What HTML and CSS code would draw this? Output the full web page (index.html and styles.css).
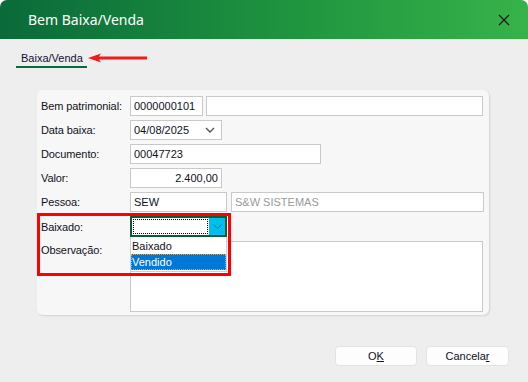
FILE: index.html
```html
<!DOCTYPE html>
<html>
<head>
  <link rel="stylesheet" href="styles.css">
</head>
<body>
  <div class="window">
    <div class="titlebar">
      <span class="title">Bem Baixa/Venda</span>
      <svg class="close" width="12" height="12" viewBox="0 0 12 12">
        <path d="M1 1 L11 11 M11 1 L1 11" stroke="#1b1b1b" stroke-width="1.3" fill="none"/>
      </svg>
    </div>

    <div class="tabs">
      <div class="tab">Baixa/Venda</div>
      <svg class="arrow" width="60" height="10" viewBox="0 0 60 10">
        <path d="M0 5 L13 0.5 L11 3.5 L59 3.5 L59 6.5 L11 6.5 L13 9.5 Z" fill="#ee1c1c"/>
      </svg>
    </div>

    <div class="panel">
      <div class="form">
        <label>Bem patrimonial:</label>
        <div class="field">
          <div class="input w73">0000000101</div>
          <div class="input w277"></div>
        </div>

        <label>Data baixa:</label>
        <div class="field">
          <div class="input w92 date">04/08/2025
            <svg width="10" height="6" viewBox="0 0 10 6"><path d="M1 1 L5 5 L9 1" stroke="#555" stroke-width="1.4" fill="none"/></svg>
          </div>
        </div>

        <label>Documento:</label>
        <div class="field">
          <div class="input w191">00047723</div>
        </div>

        <label>Valor:</label>
        <div class="field">
          <div class="input w92 right">2.400,00</div>
        </div>

        <label>Pessoa:</label>
        <div class="field">
          <div class="input w96">SEW</div>
          <div class="input w253 muted">S&amp;W SISTEMAS</div>
        </div>

        <label>Baixado:</label>
        <div class="field">
          <div class="combo">
            <div class="combo-text"></div>
            <div class="combo-btn">
              <svg width="9" height="5" viewBox="0 0 9 5"><path d="M0.5 0.5 L4.5 4.5 L8.5 0.5" stroke="#3a6f8a" stroke-width="1" fill="none"/></svg>
            </div>
            <div class="droplist">
              <div class="opt">Baixado</div>
              <div class="opt sel">Vendido</div>
            </div>
          </div>
        </div>

        <label class="top">Observação:</label>
        <div class="field">
          <div class="memo"></div>
        </div>
      </div>

      <div class="highlight"></div>
    </div>

    <div class="footer">
      <button class="btn">O<u>K</u></button>
      <button class="btn">Cancela<u>r</u></button>
    </div>
  </div>
</body>
</html>
```

FILE: styles.css
```css
html, body {
  margin: 0;
  background: #ffffff;
}

body {
  font-family: 'Liberation Sans', Arial, sans-serif;
  font-size: 11px;
  color: #111122;
}

.window {
  width: 528px;
  height: 382px;
  background: #eeeeee;
  display: flex;
  flex-direction: column;
  overflow: hidden;
  border-radius: 7px 7px 0 0;
}

.titlebar {
  height: 39px;
  flex: none;
  display: flex;
  align-items: center;
  justify-content: space-between;
  padding: 0 18px 0 28px;
  background: linear-gradient(90deg, #0a6a3a 0%, #1f943f 55%, #37b34a 100%);
  color: #ffffff;
}

.title {
  font-family: 'Noto Sans', sans-serif;
  font-size: 14px;
}

.close {
  margin-top: 1px;
}

.tabs {
  display: flex;
  align-items: center;
  padding: 11px 0 0 16px;
}

.tab {
  width: 71px;
  box-sizing: border-box;
  padding: 0 0 0 5px;
  line-height: 16px;
  border-bottom: 2px solid #0a6b3a;
  color: #111133;
  white-space: nowrap;
}

.arrow {
  margin: -2px 0 0 1px;
}

.panel {
  position: relative;
  margin: 22px 0 0 37px;
  width: 452px;
  height: 225px;
  box-sizing: border-box;
  padding: 6px 0 0 4px;
  background: #f7f7f7;
  border-radius: 6px;
  box-shadow: 1px 1px 2px rgba(0, 0, 0, 0.12);
}

.form {
  display: grid;
  grid-template-columns: 89px auto;
  row-gap: 4px;
  align-items: center;
}

.form label {
  white-space: nowrap;
  letter-spacing: -0.1px;
}

.form label.top {
  align-self: start;
  padding-top: 3px;
}

.field {
  display: flex;
  gap: 3px;
}

.input {
  height: 20px;
  box-sizing: border-box;
  border: 1px solid #c9c9c9;
  background: #ffffff;
  padding: 0 3px;
  line-height: 18px;
  white-space: nowrap;
}

.w73 { width: 73px; }
.w92 { width: 92px; }
.w96 { width: 97px; margin-right: 1px; }
.w191 { width: 191px; }
.w253 { width: 253px; }
.w277 { width: 277px; }

.right { text-align: right; }

.muted { color: #9a9a9a; }

.date {
  display: flex;
  align-items: center;
  justify-content: space-between;
  padding-right: 6px;
}

.combo {
  position: relative;
  width: 97px;
  height: 21px;
  box-sizing: border-box;
  border: 2px solid #0d5a36;
  background: #ffffff;
  display: flex;
}

.combo-text {
  flex: 1;
  margin: 1px;
  border: 1px dotted #000000;
}

.combo-btn {
  width: 16px;
  background: #00bfef;
  display: flex;
  align-items: center;
  justify-content: center;
}

.droplist {
  position: absolute;
  top: 19px;
  left: -2px;
  width: 97px;
  height: 35px;
  box-sizing: border-box;
  border: 1px solid #d0d0d0;
  border-top: none;
  background: #ffffff;
  padding: 1px 0 0 0;
  z-index: 2;
}

.opt {
  height: 16px;
  line-height: 16px;
  padding: 0 1px;
}

.opt.sel {
  background: #0078d7;
  color: #ffffff;
  outline: 1px dotted #f0a030;
  outline-offset: -1px;
}

.memo {
  width: 353px;
  height: 71px;
  box-sizing: border-box;
  border: 1px solid #c9c9c9;
  background: #ffffff;
}

.highlight {
  position: absolute;
  left: 0;
  top: 123px;
  width: 194px;
  height: 63px;
  box-sizing: border-box;
  border: 3px solid #ff0000;
  z-index: 3;
}

.footer {
  display: flex;
  justify-content: flex-end;
  gap: 9px;
  padding: 31px 19px 0 0;
}

.btn {
  width: 82px;
  height: 20px;
  padding: 0;
  font-family: inherit;
  font-size: 11px;
  color: #111122;
  background: #fdfdfd;
  border: 1px solid #e2e2e2;
  border-radius: 4px;
}

.btn + .btn {
  width: 83px;
}
```
